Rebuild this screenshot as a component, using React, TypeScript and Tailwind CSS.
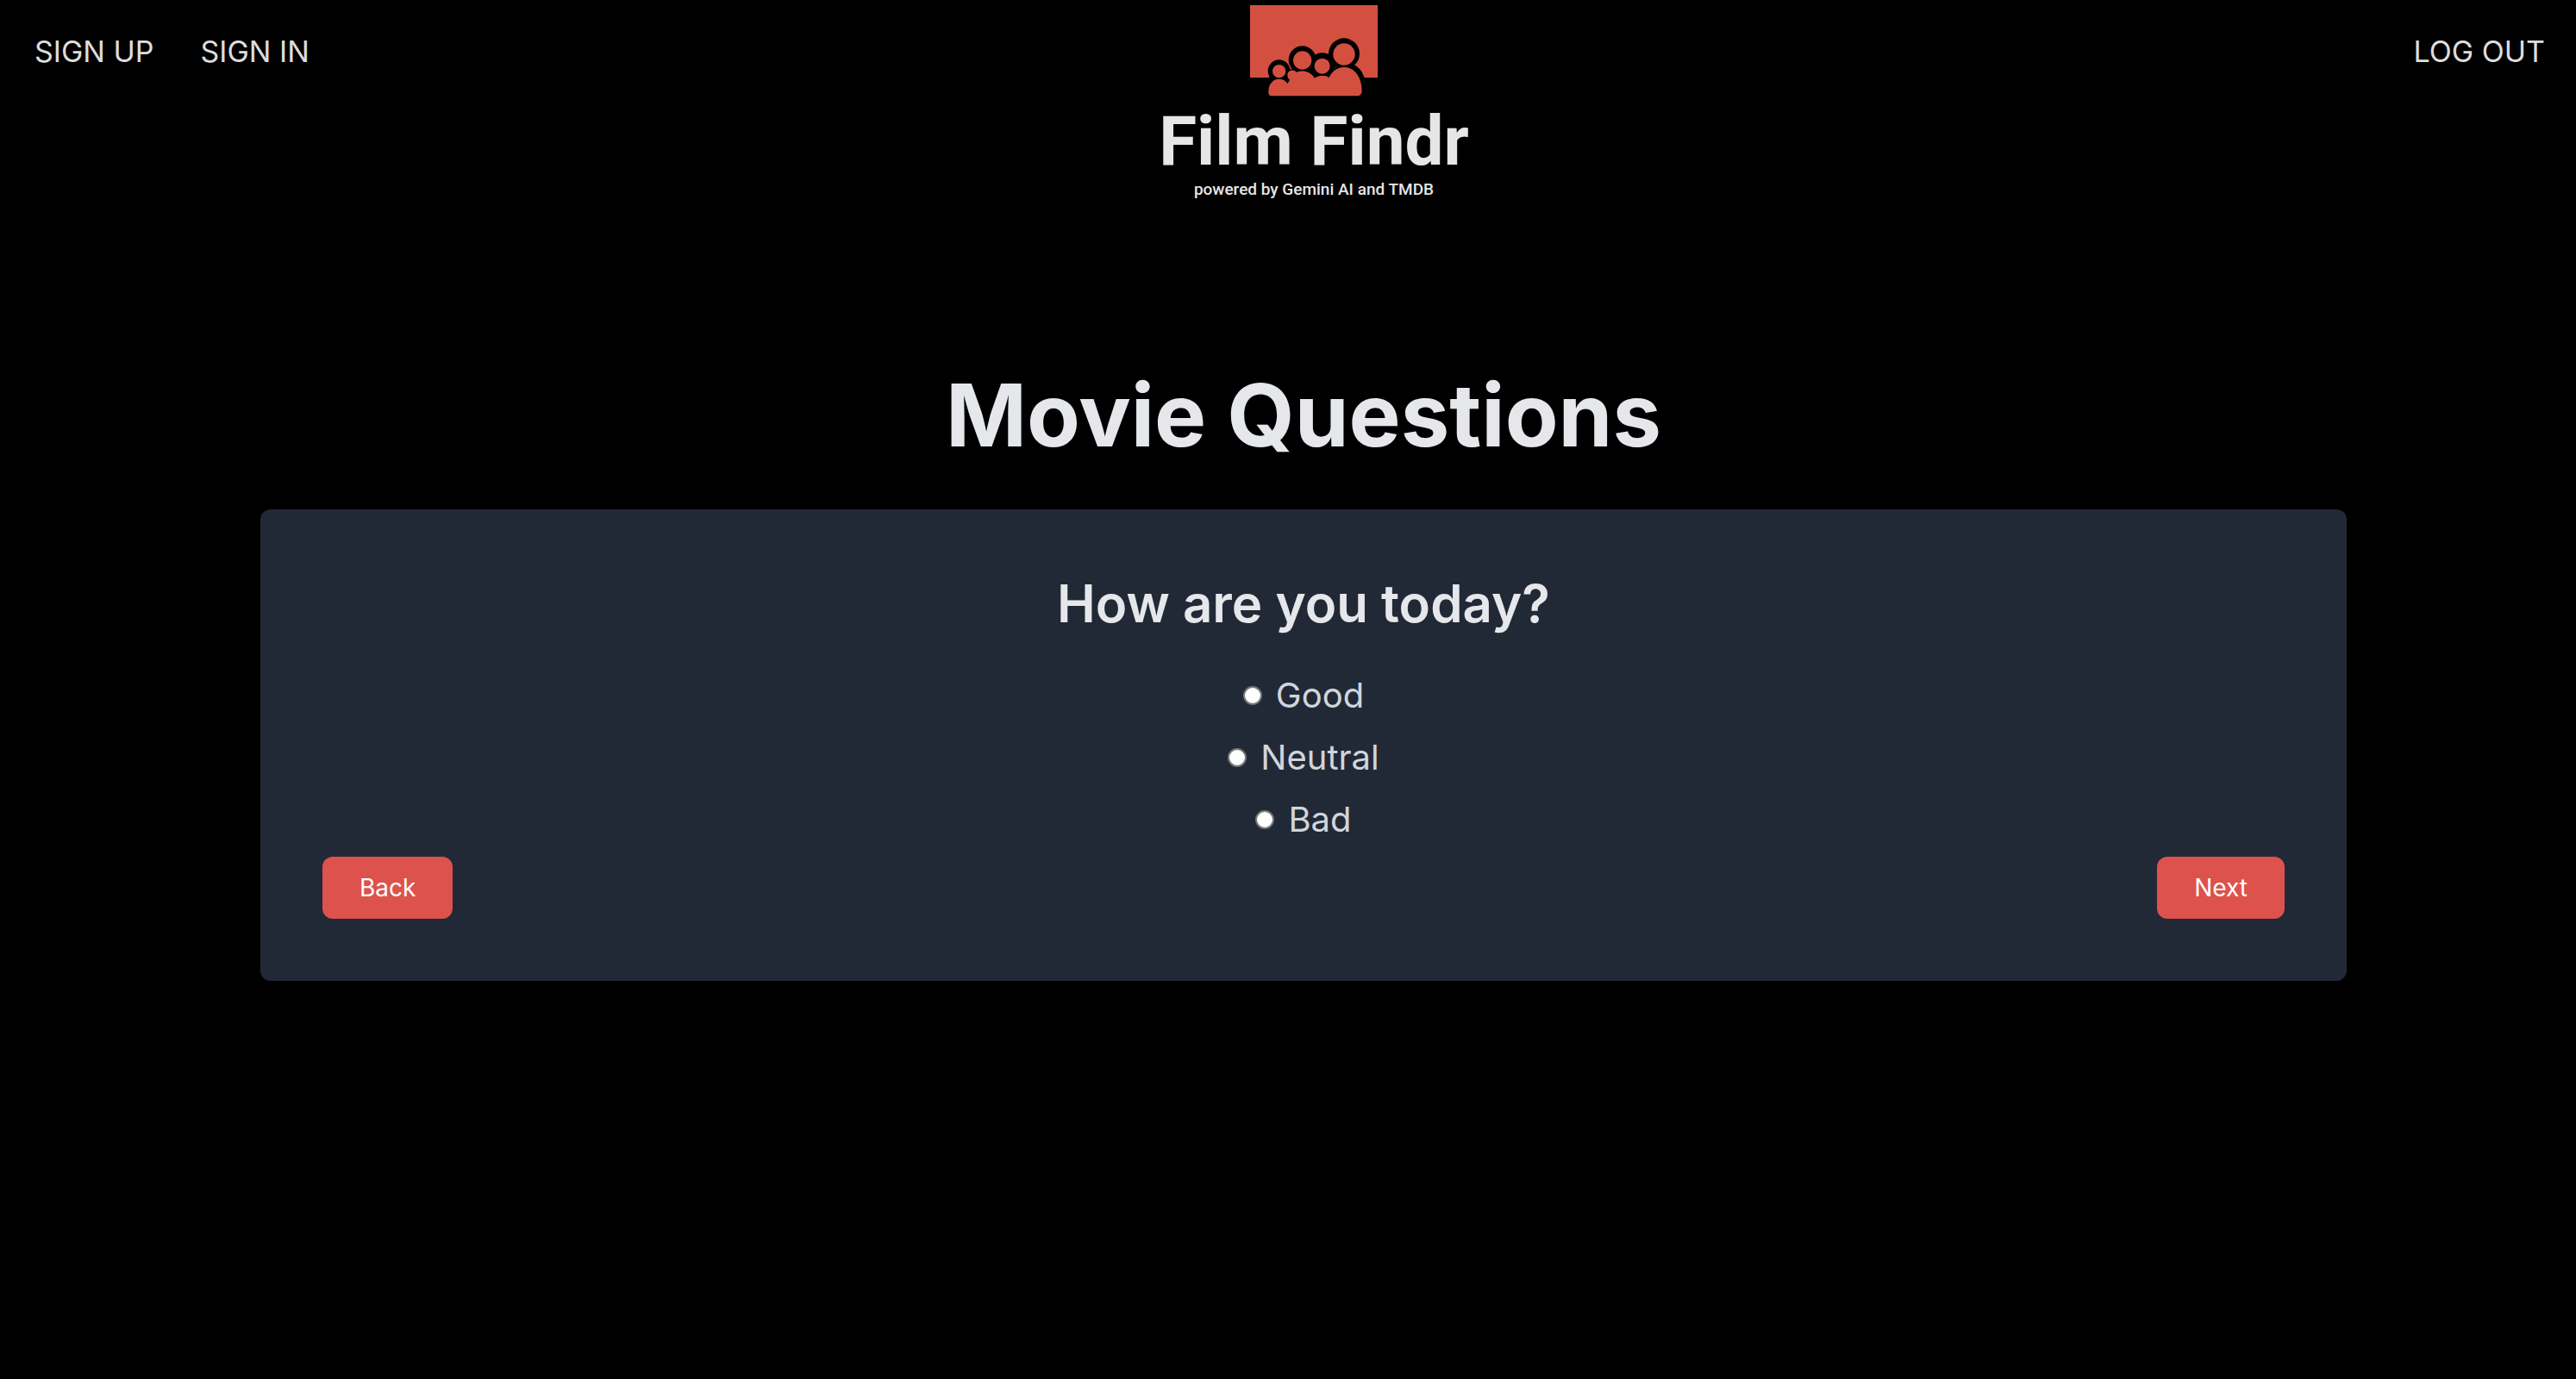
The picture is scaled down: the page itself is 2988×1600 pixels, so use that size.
import { useState } from "react";

const moods = ["Good", "Neutral", "Bad"];

function AudienceMark() {
  return (
    <svg viewBox="60 17 444 318" className="h-[106px] w-[148px]" aria-hidden="true">
      <rect x="60" y="17" width="444" height="252" fill="#d35040" />
      <g fill="#000">
        <circle cx="161" cy="246" r="39" />
        <circle cx="242" cy="207" r="48" />
        <circle cx="311" cy="229" r="46" />
        <circle cx="387" cy="186" r="54" />
        <path d="M127 335V262L150 240H300L425 226C440 234 452 250 458 270V335Z" />
      </g>
      <g fill="#d35040">
        <circle cx="161" cy="247" r="23" />
        <circle cx="242" cy="209" r="32" />
        <circle cx="311" cy="229" r="27" />
        <circle cx="387" cy="188" r="38" />
        <path d="M137 333Q124 333 124 319C124 292 139 274 161 274C175 274 186 281 191 291C193 285 194 282 198 277C190 270 188 260 192 252C197 242 212 240 222 250C244 242 270 248 285 271C300 260 322 260 335 269C345 246 365 233 388 233C425 233 449 270 449 315Q449 333 432 333Z" />
      </g>
    </svg>
  );
}

export default function App() {
  const [mood, setMood] = useState("");

  return (
    <div className="min-h-screen bg-black font-['Inter',sans-serif]">
      <header className="grid grid-cols-[1fr_auto_1fr] items-start px-9 pt-[6px]">
        <nav className="flex gap-[54px] pt-7 pl-1 text-[34px] leading-[52px] text-[#dddddd]">
          <a href="#signup">SIGN UP</a>
          <a href="#signin">SIGN IN</a>
        </nav>
        <a href="#home" className="ml-[60px] flex flex-col items-center font-['Roboto',sans-serif] text-[#e6e6e6]">
          <AudienceMark />
          <span className="text-[80px] leading-[104px] font-bold">Film Findr</span>
          <span className="text-[19px] leading-[8px] font-medium">powered by Gemini AI and TMDB</span>
        </a>
        <div className="pt-7 text-right text-[34px] leading-[52px] text-[#dddddd]">
          <a href="#logout">LOG OUT</a>
        </div>
      </header>

      <main className="mt-[197px] mr-[266px] ml-[302px] text-center">
        <h1 className="text-[101px] leading-[120px] font-bold text-[#e5e7eb]">Movie Questions</h1>
        <form className="mt-[50px] rounded-xl bg-[#222936] p-[72px]" onSubmit={(e) => e.preventDefault()}>
          <fieldset>
            <legend className="w-full text-[60px] leading-[74px] font-semibold text-[#e5e7eb]">
              How are you today?
            </legend>
            <div className="mt-[34px] text-[40px] leading-[72px] text-[#d1d5db]">
              {moods.map((m) => (
                <label key={m} className="flex items-center justify-center gap-4">
                  <input
                    type="radio"
                    name="mood"
                    value={m}
                    checked={mood === m}
                    onChange={() => setMood(m)}
                    className="size-[22px] appearance-none rounded-full border-2 border-[#767676] bg-white checked:border-[6px]"
                  />
                  {m}
                </label>
              ))}
            </div>
          </fieldset>
          <div className="mt-[7px] flex justify-between text-[28px] leading-[40px] text-white">
            <button type="button" className="rounded-xl bg-[#dd524c] px-[43px] py-4">Back</button>
            <button type="submit" className="rounded-xl bg-[#dd524c] px-[43px] py-4">Next</button>
          </div>
        </form>
      </main>
    </div>
  );
}
